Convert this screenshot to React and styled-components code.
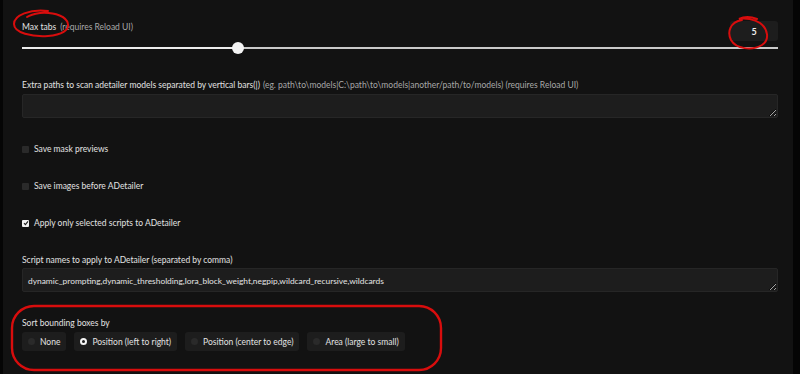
import React from 'react';
import styled, { createGlobalStyle } from 'styled-components';

const GlobalStyle = createGlobalStyle`
  html, body {
    margin: 0;
    background: #050505;
  }
  body {
    font-family: Lato, "Noto Sans", sans-serif;
    color-scheme: dark;
  }
`;

const Page = styled.div`
  position: relative;
  width: 800px;
  height: 374px;
  overflow: hidden;
  background: #050505;
`;

const Panel = styled.div`
  margin-left: 3px;
  width: 790px;
  height: 374px;
  box-sizing: border-box;
  padding: 21px 15px 0 19px;
  background: #121212;
  display: flex;
  flex-direction: column;
  gap: 25px;
`;

const Block = styled.div`
  display: flex;
  flex-direction: column;
`;

const HeaderRow = styled.div`
  display: flex;
  justify-content: space-between;
  align-items: flex-start;
  height: 20px;
`;

const Label = styled.div`
  font-size: 8.5px;
  line-height: 12px;
  color: #e2e2e2;
  white-space: nowrap;
`;

const Hint = styled.span`
  color: #a8a8a8;
  margin-left: ${(p) => p.$gap || 3}px;
`;

const NumberBox = styled.div`
  width: 48px;
  height: 20px;
  border-radius: 3px;
  background: #1d1d1d;
  color: #f0f0f0;
  font-size: 9px;
  font-weight: 700;
  display: flex;
  align-items: center;
  justify-content: center;
`;

const SliderWrap = styled.div`
  position: relative;
  height: 12px;
  margin-top: 1px;
  display: flex;
  align-items: center;
`;

const Track = styled.div`
  position: relative;
  width: 100%;
  height: 2px;
  background: #c9c9c9;
`;

const Fill = styled.div`
  height: 100%;
  background: #ececec;
`;

const Thumb = styled.div`
  position: absolute;
  top: 50%;
  width: 12px;
  height: 12px;
  margin: -6px 0 0 -6px;
  border-radius: 50%;
  background: #f4f4f4;
`;

const TextArea = styled.textarea`
  margin-top: ${(p) => p.$top || 3}px;
  height: 24px;
  box-sizing: border-box;
  resize: vertical;
  border: 1px solid #262626;
  border-radius: 2px;
  background: #1d1d1d;
  color: #e4e4e4;
  font-family: Lato, "Noto Sans", sans-serif;
  font-size: 8.4px;
  line-height: 12px;
  padding: 6px 5px 5px;
  outline: none;
  overflow: hidden;
`;

const CheckRow = styled.label`
  display: flex;
  align-items: center;
  gap: 5px;
  height: 12px;
  font-size: 8.5px;
  color: #e2e2e2;
`;

const Box = styled.span`
  width: 7px;
  height: 7px;
  border-radius: 1px;
  background: ${(p) => (p.$checked ? '#f2f2f2' : '#2a2a2a')};
  display: flex;
  align-items: center;
  justify-content: center;
`;

const RadioGroup = styled.div`
  display: flex;
  gap: 8px;
  margin-top: 3px;
`;

const Pill = styled.label`
  display: flex;
  align-items: center;
  gap: 5px;
  height: 19px;
  padding: 0 6px 0 6px;
  border-radius: 3px;
  background: #1d1d1d;
  font-size: 8.5px;
  color: #e2e2e2;
  white-space: nowrap;
`;

const Dot = styled.span`
  width: 7px;
  height: 7px;
  box-sizing: border-box;
  border-radius: 50%;
  background: ${(p) => (p.$on ? '#1d1d1d' : '#2a2a2a')};
  border: ${(p) => (p.$on ? '2.5px solid #f4f4f4' : 'none')};
`;

const Marks = styled.svg`
  position: absolute;
  left: 0;
  top: 0;
  pointer-events: none;
`;

const Checkbox = ({ checked, children }) => (
  <CheckRow>
    <Box $checked={checked}>
      {checked && (
        <svg width="6" height="6" viewBox="0 0 6 6">
          <path d="M1 3.2 L2.4 4.6 L5 1.4" fill="none" stroke="#222" strokeWidth="1.2" />
        </svg>
      )}
    </Box>
    {children}
  </CheckRow>
);

const sortOptions = [
  'None',
  'Position (left to right)',
  'Position (center to edge)',
  'Area (large to small)',
];

export default function App() {
  const value = 5;
  const pct = ((value - 1) / 14) * 100;

  return (
    <Page>
      <GlobalStyle />
      <Panel>
        <Block>
          <HeaderRow>
            <Label>
              Max tabs<Hint $gap={4}>(requires Reload UI)</Hint>
            </Label>
            <NumberBox>{value}</NumberBox>
          </HeaderRow>
          <SliderWrap>
            <Track>
              <Fill style={{ width: `${pct}%` }} />
              <Thumb style={{ left: `${pct}%` }} />
            </Track>
          </SliderWrap>
        </Block>

        <Block>
          <Label>
            Extra paths to scan adetailer models separated by vertical bars(|)
            <Hint>
              (eg. path\to\models|C:\path\to\models|another/path/to/models) (requires Reload UI)
            </Hint>
          </Label>
          <TextArea defaultValue="" />
        </Block>

        <Checkbox>Save mask previews</Checkbox>
        <Checkbox>Save images before ADetailer</Checkbox>
        <Checkbox checked>Apply only selected scripts to ADetailer</Checkbox>

        <Block>
          <Label>Script names to apply to ADetailer (separated by comma)</Label>
          <TextArea
            $top={2}
            defaultValue="dynamic_prompting,dynamic_thresholding,lora_block_weight,negpip,wildcard_recursive,wildcards"
          />
        </Block>

        <Block>
          <Label>Sort bounding boxes by</Label>
          <RadioGroup>
            {sortOptions.map((opt, i) => (
              <Pill key={opt}>
                <Dot $on={i === 1} />
                {opt}
              </Pill>
            ))}
          </RadioGroup>
        </Block>
      </Panel>

      <Marks width="800" height="374" viewBox="0 0 800 374">
        <g fill="none" stroke="#d80d0d" strokeWidth="2" strokeLinecap="round">
          <path d="M48 11 C30 9 14 15 14 24 C14 33 32 37 48 36 C62 35 69 30 68 24 C67 17 56 12 40 13 C34 14 30 15 27 17" />
          <path d="M742 20 C730 22 727 32 731 40 C736 49 752 51 762 45 C770 40 768 29 760 23 C754 19 745 18 739 19 C745 16 752 17 757 19" />
          <rect x="12" y="306" width="429" height="64" rx="22" ry="22" strokeWidth="2.4" />
        </g>
      </Marks>
    </Page>
  );
}
